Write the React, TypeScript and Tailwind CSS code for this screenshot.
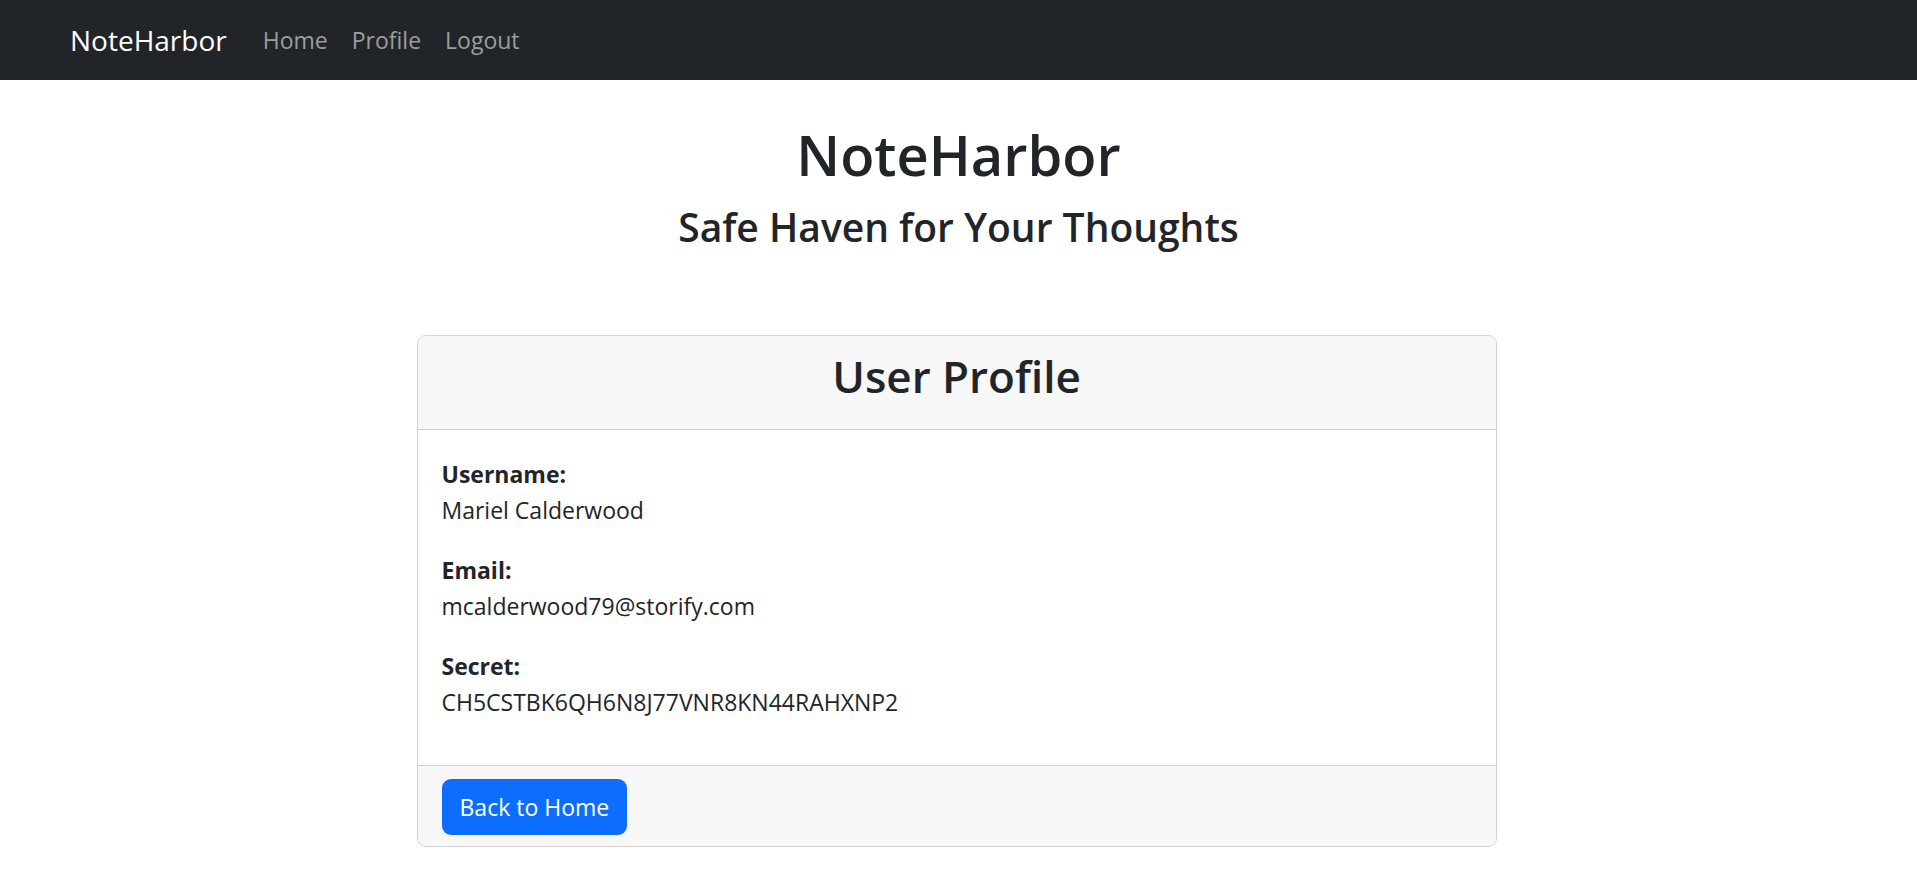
import React from 'react';

const PROFILE_FIELDS = [
  { label: 'Username:', value: 'Mariel Calderwood' },
  { label: 'Email:', value: 'mcalderwood79@storify.com' },
  { label: 'Secret:', value: 'CH5CSTBK6QH6N8J77VNR8KN44RAHXNP2' },
];

const NAV_LINKS = ['Home', 'Profile', 'Logout'];

export default function App() {
  return (
    <div className="min-h-screen bg-white text-[#212529] font-['Open_Sans',_'Noto_Sans',_sans-serif]">
      {/* navbar */}
      <nav className="h-[80px] bg-[#212529] flex items-center pl-[70px]">
        <a href="#" className="text-[28px] leading-[44px] text-white mr-[24px]">
          NoteHarbor
        </a>
        <ul className="flex items-center">
          {NAV_LINKS.map((link) => (
            <li key={link}>
              <a href="#" className="block px-[12px] text-[23px] leading-[35px] text-[#9b9d9f] hover:text-white">
                {link}
              </a>
            </li>
          ))}
        </ul>
      </nav>

      <main className="flex flex-col items-center">
        <header className="text-center mt-[40px]">
          <h1 className="text-[56px] leading-[68px] font-semibold">NoteHarbor</h1>
          <h3 className="text-[39px] leading-[48px] font-semibold mt-[15px]">Safe Haven for Your Thoughts</h3>
        </header>

        <section className="w-[1080px] mr-[4px] mt-[84px] mb-[30px] border border-[#d2d2d2] rounded-[9px] overflow-hidden">
          <div className="bg-[#f7f7f7] border-b border-[#d2d2d2] pt-[13px] pb-[25px] text-center">
            <h2 className="text-[44px] leading-[55px] font-semibold">User Profile</h2>
          </div>

          <div className="px-[24px] pt-[26px] pb-[21px]">
            {PROFILE_FIELDS.map((field) => (
              <div key={field.label} className="mb-[24px] text-[23px] leading-[36px]">
                <p className="font-bold">{field.label}</p>
                <p>{field.value}</p>
              </div>
            ))}
          </div>

          <div className="bg-[#f7f7f7] border-t border-[#d2d2d2] px-[24px] pt-[13px] pb-[11px]">
            <a
              href="#"
              className="inline-flex items-center h-[56px] px-[18px] rounded-[9px] bg-[#0d6efd] text-white text-[23px] hover:bg-[#0b5ed7]"
            >
              Back to Home
            </a>
          </div>
        </section>
      </main>
    </div>
  );
}
